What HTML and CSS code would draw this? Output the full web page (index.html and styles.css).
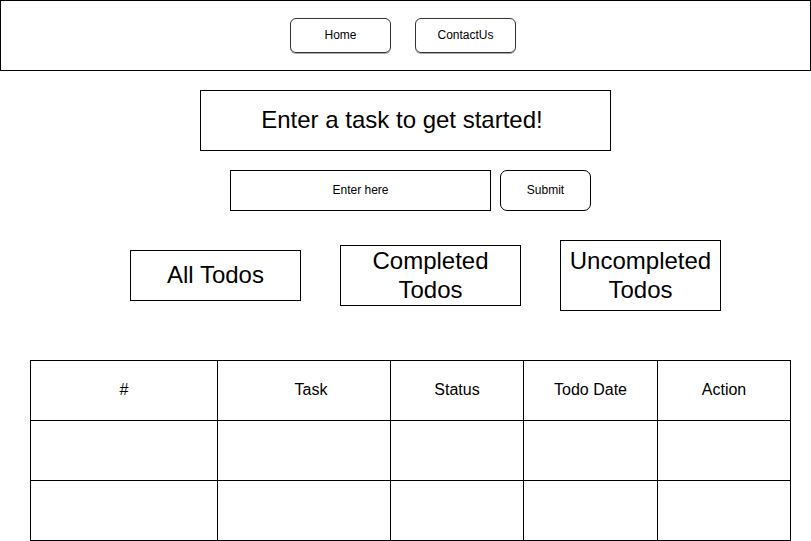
FILE: index.html
```html
<!DOCTYPE html>
<html lang="en">
<head>
<meta charset="utf-8">
<title>Todo App</title>
<link rel="stylesheet" href="styles.css">
</head>
<body>
<header class="nav">
  <a class="nav-btn">Home</a>
  <a class="nav-btn">ContactUs</a>
</header>
<main class="main">
  <div class="title-box">Enter a task to get started!</div>
  <div class="entry-row">
    <div class="entry-input">Enter here</div>
    <div class="submit-btn">Submit</div>
  </div>
  <div class="filters">
    <div class="filter filter-all">All Todos</div>
    <div class="filter filter-done">Completed<br>Todos</div>
    <div class="filter filter-undone">Uncompleted<br>Todos</div>
  </div>
  <div class="grid">
    <div class="cell head">#</div>
    <div class="cell head task-head">Task</div>
    <div class="cell head">Status</div>
    <div class="cell head">Todo Date</div>
    <div class="cell head">Action</div>
    <div class="cell"></div><div class="cell"></div><div class="cell"></div><div class="cell"></div><div class="cell"></div>
    <div class="cell"></div><div class="cell"></div><div class="cell"></div><div class="cell"></div><div class="cell"></div>
  </div>
</main>
</body>
</html>
```

FILE: styles.css
```css
* { box-sizing: border-box; }
html, body {
  margin: 0;
  padding: 0;
  background: #fff;
  color: #000;
  font-family: "Liberation Sans", Arial, Helvetica, sans-serif;
}
.nav {
  width: 811px;
  height: 71px;
  border: 1px solid #000;
  display: flex;
  align-items: center;
  justify-content: center;
  gap: 24px;
  padding-right: 5px;
}
.nav-btn {
  width: 101px;
  height: 35px;
  border: 1px solid #333;
  border-radius: 6px;
  box-shadow: 0 1px 0 #aaa;
  display: flex;
  align-items: center;
  justify-content: center;
  font-size: 12px;
  color: #000;
  padding-bottom: 2px;
}
.main {
  display: flex;
  flex-direction: column;
}
.title-box {
  align-self: center;
  margin-top: 19px;
  width: 411px;
  height: 61px;
  border: 1px solid #000;
  display: flex;
  align-items: center;
  justify-content: center;
  font-size: 24px;
  margin-left: -1px;
  padding-right: 6px;
  padding-bottom: 2px;
}
.entry-row {
  display: flex;
  gap: 9px;
  margin-top: 19px;
  padding-left: 230px;
}
.entry-input {
  width: 261px;
  height: 41px;
  border: 1px solid #000;
  display: flex;
  align-items: center;
  justify-content: center;
  font-size: 12px;
  padding-bottom: 2px;
}
.submit-btn {
  width: 91px;
  height: 41px;
  border: 1px solid #000;
  border-radius: 7px;
  display: flex;
  align-items: center;
  justify-content: center;
  font-size: 12px;
  padding-bottom: 2px;
}
.filters {
  display: flex;
  align-items: center;
  gap: 39px;
  margin-top: 29px;
  padding-left: 130px;
  height: 71px;
}
.filter {
  border: 1px solid #000;
  display: flex;
  align-items: center;
  justify-content: center;
  text-align: center;
  font-size: 24px;
  line-height: 29px;
  padding-bottom: 2px;
}
.filter-all { width: 171px; height: 51px; }
.filter-done { width: 181px; height: 61px; }
.filter-undone { width: 161px; height: 71px; }
.grid {
  margin-top: 49px;
  margin-left: 30px;
  width: 761px;
  display: grid;
  grid-template-columns: 187px 173px 133px 134px 133px;
  grid-auto-rows: 60px;
  border-left: 1px solid #000;
  border-top: 1px solid #000;
}
.cell {
  border-right: 1px solid #000;
  border-bottom: 1px solid #000;
  display: flex;
  align-items: center;
  justify-content: center;
  font-size: 16px;
}
.head { padding-bottom: 2px; }
.task-head { padding-left: 14px; }
```
